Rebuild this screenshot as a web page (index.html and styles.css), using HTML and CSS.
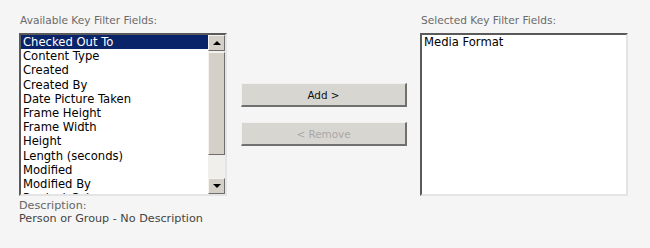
FILE: index.html
```html
<!DOCTYPE html>
<html lang="en">
<head>
    <meta charset="UTF-8">
    <title>Key Filter Fields</title>
    <link rel="stylesheet" href="styles.css">
</head>
<body>
    <div class="picker">
        <div class="column">
            <div class="label">Available Key Filter Fields:</div>
            <div class="listbox">
                <div class="options">
                    <div class="option selected">Checked Out To</div>
                    <div class="option">Content Type</div>
                    <div class="option">Created</div>
                    <div class="option">Created By</div>
                    <div class="option">Date Picture Taken</div>
                    <div class="option">Frame Height</div>
                    <div class="option">Frame Width</div>
                    <div class="option">Height</div>
                    <div class="option">Length (seconds)</div>
                    <div class="option">Modified</div>
                    <div class="option">Modified By</div>
                    <div class="option">Product Category</div>
                </div>
                <div class="scrollbar">
                    <div class="arrow"><span class="tri up"></span></div>
                    <div class="thumb"></div>
                    <div class="track"></div>
                    <div class="arrow"><span class="tri down"></span></div>
                </div>
            </div>
            <div class="description">
                <div class="desc-label">Description:</div>
                <div class="desc-text">Person or Group - No Description</div>
            </div>
        </div>

        <div class="actions">
            <button class="btn">Add &gt;</button>
            <button class="btn" disabled>&lt; Remove</button>
        </div>

        <div class="column">
            <div class="label">Selected Key Filter Fields:</div>
            <div class="listbox">
                <div class="options">
                    <div class="option">Media Format</div>
                </div>
            </div>
        </div>
    </div>
</body>
</html>
```

FILE: styles.css
```css
* {
    margin: 0;
    padding: 0;
    box-sizing: border-box;
}

body {
    background-color: #f5f5f5;
    font-family: "DejaVu Sans", Verdana, sans-serif;
    color: #000;
}

.picker {
    display: flex;
    align-items: flex-start;
    padding: 14px 0 0 19px;
}

.column {
    width: 208px;
}

.label {
    font-size: 10.6px;
    line-height: 12px;
    color: #6a6a6a;
    margin-left: 1px;
    margin-bottom: 7px;
}

.listbox {
    display: flex;
    height: 163px;
    background: #fff;
    border-top: 2px solid #5a5a5a;
    border-left: 2px solid #5a5a5a;
    border-right: 2px solid #e4e4e4;
    border-bottom: 2px solid #e4e4e4;
    overflow: hidden;
}

.options {
    flex: 1;
    overflow: hidden;
}

.option {
    font-size: 11.6px;
    line-height: 14.2px;
    padding-left: 2px;
    white-space: nowrap;
}

.option.selected {
    background: #0a246a;
    color: #fff;
}

.scrollbar {
    width: 17px;
    display: flex;
    flex-direction: column;
    background: #f0efeb;
}

.arrow,
.thumb {
    background: #d4d0c8;
    border-top: 1px solid #f4f3ef;
    border-left: 1px solid #f4f3ef;
    border-right: 1px solid #6e6e6e;
    border-bottom: 1px solid #6e6e6e;
}

.arrow {
    height: 16px;
    display: flex;
    align-items: center;
    justify-content: center;
}

.thumb {
    height: 103px;
    margin-top: 1px;
}

.track {
    flex: 1;
    background-image: radial-gradient(#d8d6d0 0.5px, transparent 0.6px);
    background-size: 2px 2px;
}

.tri {
    width: 0;
    height: 0;
    border-left: 4px solid transparent;
    border-right: 4px solid transparent;
}

.tri.up {
    border-bottom: 4px solid #000;
}

.tri.down {
    border-top: 4px solid #000;
}

.description {
    margin-top: 3px;
    font-size: 11.2px;
    line-height: 13px;
}

.desc-label {
    color: #666;
}

.desc-text {
    color: #444;
}

.actions {
    display: flex;
    flex-direction: column;
    gap: 15px;
    margin: 69px 13px 0 14px;
}

.btn {
    width: 166px;
    height: 24px;
    font-family: "DejaVu Sans", Tahoma, sans-serif;
    font-size: 10.4px;
    color: #111;
    background: #d8d6d0;
    border-top: 1px solid #f2f1ee;
    border-left: 1px solid #f2f1ee;
    border-right: 2px solid #707070;
    border-bottom: 2px solid #707070;
}

.btn:disabled {
    color: #a8a8a8;
}
```
